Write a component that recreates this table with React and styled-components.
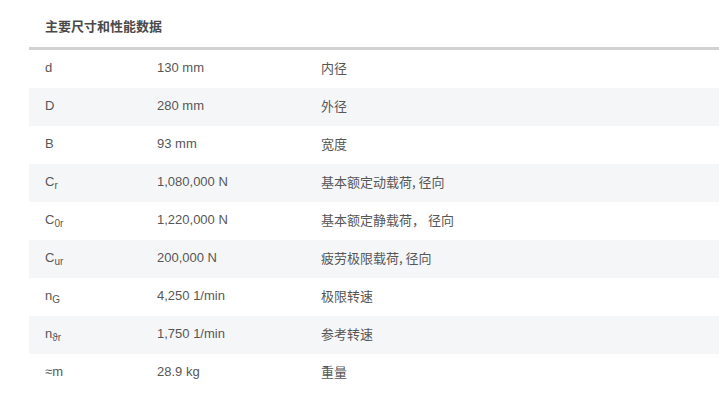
import React from 'react';
import styled, { createGlobalStyle } from 'styled-components';

const GlobalStyle = createGlobalStyle`
  body {
    margin: 0;
    background: #fff;
    font-family: "Liberation Sans", Arial, "Noto Sans CJK SC", sans-serif;
  }
`;

const rows = [
  { sym: 'd', value: '130 mm', label: '内径' },
  { sym: 'D', value: '280 mm', label: '外径' },
  { sym: 'B', value: '93 mm', label: '宽度' },
  { sym: 'C', sub: 'r', value: '1,080,000 N', label: '基本额定动载荷, 径向' },
  { sym: 'C', sub: '0r', value: '1,220,000 N', label: '基本额定静载荷， 径向' },
  { sym: 'C', sub: 'ur', value: '200,000 N', label: '疲劳极限载荷, 径向' },
  { sym: 'n', sub: 'G', value: '4,250 1/min', label: '极限转速' },
  { sym: 'n', sub: 'ϑr', value: '1,750 1/min', label: '参考转速' },
  { sym: '≈m', value: '28.9 kg', label: '重量' },
];

const App = () => {
  return (
    <Page>
      <GlobalStyle />
      <Title>主要尺寸和性能数据</Title>
      <Table>
        {rows.map((row, i) => (
          <Row key={i} $shaded={i % 2 === 1}>
            <Symbol>
              {row.sym}
              {row.sub && <Sub>{row.sub}</Sub>}
            </Symbol>
            <Value>{row.value}</Value>
            <Label>{row.label}</Label>
          </Row>
        ))}
      </Table>
    </Page>
  );
};

export default App;

const Page = styled.div`
  padding-left: 29px;
`;

const Title = styled.div`
  height: 47px;
  line-height: 52px;
  padding-left: 16px;
  font-family: "Noto Sans CJK SC", sans-serif;
  font-size: 13px;
  font-weight: 700;
  color: #4a4a4a;
  border-bottom: 3px solid #d2d2d2;
`;

const Table = styled.div`
  display: flex;
  flex-direction: column;
`;

const Row = styled.div`
  display: grid;
  grid-template-columns: 128px 164px 1fr;
  align-items: center;
  height: 38px;
  padding-bottom: 2px;
  box-sizing: border-box;
  line-height: 16px;
  background: ${(p) => (p.$shaded ? '#f5f6f7' : '#fff')};
  font-size: 13px;
  color: #575757;
`;

const Symbol = styled.div`
  padding-left: 16px;
`;

const Sub = styled.sub`
  font-size: 10px;
  vertical-align: -3px;
  line-height: 0;
`;

const Value = styled.div``;

const Label = styled.div`
  font-family: "Noto Sans CJK SC", sans-serif;
  line-height: 14px;
`;
